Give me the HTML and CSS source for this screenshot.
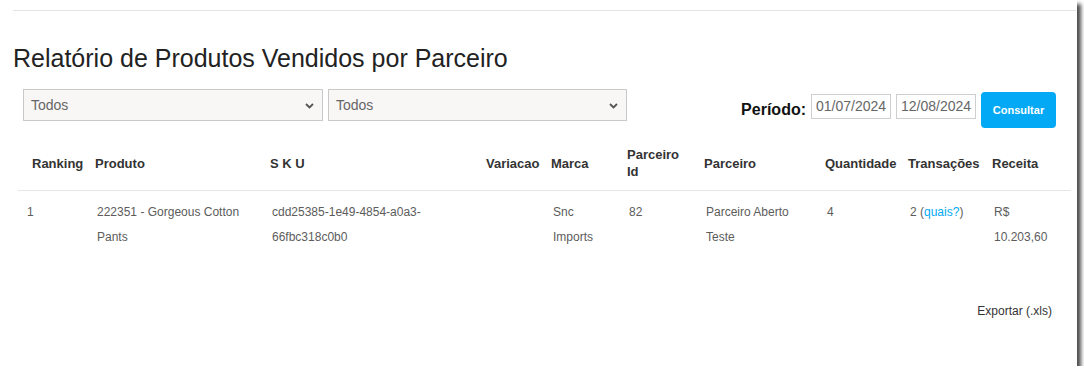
FILE: index.html
```html
<!DOCTYPE html>
<html lang="pt-BR">
<head>
<meta charset="utf-8">
<title>Relatório de Produtos Vendidos por Parceiro</title>
<link rel="stylesheet" href="styles.css">
</head>
<body>
<div class="frame">
  <div class="rule"></div>
  <h1 class="title">Relatório de Produtos Vendidos por Parceiro</h1>
  <div class="controls">
    <div class="select"><span>Todos</span><svg class="chev" width="9" height="6" viewBox="0 0 9 6"><path d="M1 1 L4.5 4.5 L8 1" fill="none" stroke="#555" stroke-width="1.8"/></svg></div>
    <div class="select"><span>Todos</span><svg class="chev" width="9" height="6" viewBox="0 0 9 6"><path d="M1 1 L4.5 4.5 L8 1" fill="none" stroke="#555" stroke-width="1.8"/></svg></div>
    <div class="period">
      <span class="period-label">Período:</span>
      <span class="date">01/07/2024</span>
      <span class="date">12/08/2024</span>
      <span class="btn">Consultar</span>
    </div>
  </div>
  <table class="report">
    <colgroup>
      <col class="c1"><col class="c2"><col class="c3"><col class="c4"><col class="c5"><col class="c6"><col class="c7"><col class="c8"><col class="c9"><col class="c10">
    </colgroup>
    <thead>
      <tr>
        <th class="first">Ranking</th>
        <th>Produto</th>
        <th>S K U</th>
        <th>Variacao</th>
        <th>Marca</th>
        <th>Parceiro Id</th>
        <th>Parceiro</th>
        <th>Quantidade</th>
        <th>Transações</th>
        <th>Receita</th>
      </tr>
    </thead>
    <tbody>
      <tr>
        <td class="first">1</td>
        <td>222351 - Gorgeous Cotton Pants</td>
        <td>cdd25385-1e49-4854-a0a3-66fbc318c0b0</td>
        <td></td>
        <td>Snc Imports</td>
        <td>82</td>
        <td>Parceiro Aberto Teste</td>
        <td>4</td>
        <td>2 (<a class="link" href="#">quais?</a>)</td>
        <td class="last">R$ 10.203,60</td>
      </tr>
    </tbody>
  </table>
  <div class="export"><span>Exportar (.xls)</span></div>
</div>
</body>
</html>
```

FILE: styles.css
```css
html, body {
  margin: 0;
  padding: 0;
  background: #ffffff;
}
body {
  font-family: "Liberation Sans", Arial, sans-serif;
  color: #555;
}
.frame {
  width: 1077px;
  height: 366px;
  box-sizing: border-box;
  padding: 10px 6px 0 13px;
  background: #fff;
  box-shadow: 4px 4px 4px rgba(0, 0, 0, 0.7);
  overflow: hidden;
}
.rule {
  height: 0;
  border-top: 1px solid #e4e4e4;
  margin-right: -5px;
}
.title {
  margin: 33px 0 0 0;
  font-size: 25px;
  line-height: 29px;
  font-weight: normal;
  color: #222;
}
.controls {
  display: flex;
  align-items: flex-start;
  margin: 16px 15px 0 10px;
}
.select {
  width: 300px;
  height: 32px;
  box-sizing: border-box;
  border: 1px solid #c9c9c9;
  background: #f8f7f6;
  display: flex;
  align-items: center;
  justify-content: space-between;
  padding: 0 8px 0 7px;
  font-size: 14px;
  color: #666;
}
.select + .select {
  margin-left: 5px;
  width: 299px;
}
.chev {
  display: block;
  margin-top: 2px;
}
.period {
  margin-left: auto;
  margin-top: 3px;
  display: flex;
  align-items: flex-start;
}
.period-label {
  font-weight: bold;
  font-size: 16px;
  line-height: 18px;
  color: #111;
  margin-top: 9px;
  margin-right: 5px;
}
.date {
  width: 80px;
  height: 25px;
  box-sizing: border-box;
  border: 1px solid #cfcfcf;
  margin-top: 2px;
  padding: 0 0 0 4px;
  font-size: 14px;
  line-height: 23px;
  color: #666;
  white-space: nowrap;
  overflow: hidden;
}
.date + .date {
  margin-left: 5px;
}
.btn {
  margin-left: 5px;
  width: 75px;
  height: 36px;
  border-radius: 4px;
  background: #03a9f4;
  color: #fff;
  font-weight: bold;
  font-size: 11px;
  display: flex;
  align-items: center;
  justify-content: center;
}
.report {
  margin: 9px 0 0 5px;
  width: 1053px;
  table-layout: fixed;
  border-collapse: collapse;
}
.c1 { width: 69px; }
.c2 { width: 175px; }
.c3 { width: 216px; }
.c4 { width: 65px; }
.c5 { width: 76px; }
.c6 { width: 77px; }
.c7 { width: 121px; }
.c8 { width: 83px; }
.c9 { width: 84px; }
.c10 { width: 87px; }
.report th {
  text-align: left;
  font-size: 13px;
  line-height: 17px;
  font-weight: bold;
  color: #333;
  padding: 9px 2px 10px 8px;
  vertical-align: middle;
  border-bottom: 1px solid #e6e6e6;
}
.report th.first {
  padding-left: 14px;
}
.report td {
  text-align: left;
  font-size: 12px;
  line-height: 25px;
  color: #5c5c5c;
  padding: 9px 8px 8px 10px;
  vertical-align: top;
}
.report td.first {
  padding-left: 9px;
}
.report td.last {
  padding-right: 14px;
}
.link {
  color: #03a9f4;
  text-decoration: none;
}
.export {
  display: flex;
  justify-content: flex-end;
  margin-top: 45px;
  padding-right: 19px;
  font-size: 12px;
  line-height: 17px;
  color: #333;
}
```
